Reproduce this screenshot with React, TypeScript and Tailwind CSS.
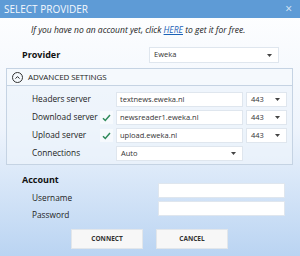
import { useState } from "react";

function Caret() {
  return (
    <svg width="5" height="3" viewBox="0 0 5 3" className="shrink-0">
      <path d="M0 0h5L2.5 3z" fill="#444" />
    </svg>
  );
}

function Check() {
  return (
    <svg width="9" height="8" viewBox="0 0 9 8">
      <path d="M1 4.2l2.3 2.3L8 1" fill="none" stroke="#2f8a5a" strokeWidth="1.5" />
    </svg>
  );
}

function Field({ value, className }: { value: string; className: string }) {
  return (
    <div className={"h-[15px] bg-white border border-[#dfe6ee] flex items-center px-[3px] text-[7.5px] text-[#333] " + className}>
      {value}
    </div>
  );
}

function Select({ value, className }: { value: string; className: string }) {
  return (
    <div className={"h-[15px] bg-white border border-[#dfe6ee] flex items-center justify-between pl-[4px] pr-[6px] text-[7.5px] text-[#333] " + className}>
      <span>{value}</span>
      <Caret />
    </div>
  );
}

interface RowProps {
  label: string;
  checked?: boolean;
  children: React.ReactNode;
}

function ServerRow({ label, checked, children }: RowProps) {
  return (
    <div className="flex items-center h-[15px]">
      <span className="w-[68px] pl-[25px] box-content text-[8.3px] text-[#222] whitespace-nowrap">{label}</span>
      <span className={checked ? "w-[13px] h-[13px] mr-[3px] flex items-center justify-center bg-white/50" : "w-[13px] h-[13px] mr-[3px]"}>
        {checked ? <Check /> : null}
      </span>
      {children}
    </div>
  );
}

export default function App() {
  const [open] = useState(true);

  return (
    <div className="w-[300px] h-[256px] overflow-hidden flex flex-col bg-gradient-to-b from-white via-[#eef4fc] to-[#bad4f2] font-['Open_Sans',sans-serif]">
      <div className="h-[18px] shrink-0 bg-[#5e9bd6] flex items-center justify-between pl-[4px] pr-[8px] text-[#f4f8fd] text-[10px]">
        <span>SELECT PROVIDER</span>
        <span className="text-[12px] text-[#dbe8f6]">×</span>
      </div>

      <p className="mt-[6px] pl-[31px] leading-[12px] italic text-[8.5px] text-[#222] whitespace-nowrap">
        If you have no an account yet, click <span className="underline text-[#1c63b7]">HERE</span> to get it for free.
      </p>

      <div className="mt-[11px] flex items-center pl-[22px] pr-[21px] h-[16px]">
        <span className="font-bold text-[9px] text-[#111]">Provider</span>
        <Select value="Eweka" className="ml-auto w-[130px] h-[16px]" />
      </div>

      <div className="mt-[5px] mx-[6px] mr-[7px] border border-[#c5d3e3] bg-[#edf3fb]/70">
        <div className="h-[17px] flex items-center pl-[5px] gap-[5px] border-b border-[#c5d3e3] bg-white/40">
          <span className="w-[11px] h-[11px] rounded-full border border-[#333] flex items-center justify-center">
            <svg width="5" height="3" viewBox="0 0 5 3">
              <path d="M0.5 2.6L2.5 0.6L4.5 2.6" fill="none" stroke="#222" strokeWidth="1" />
            </svg>
          </span>
          <span className="text-[8px] text-[#222] tracking-[-0.1px]">ADVANCED SETTINGS</span>
        </div>
        {open && (
          <div className="pt-[6px] pb-[3px] flex flex-col gap-[3px]">
            <ServerRow label="Headers server">
              <Field value="textnews.eweka.nl" className="w-[127px]" />
              <Select value="443" className="ml-[3px] w-[41px]" />
            </ServerRow>
            <ServerRow label="Download server" checked>
              <Field value="newsreader1.eweka.nl" className="w-[127px]" />
              <Select value="443" className="ml-[3px] w-[41px]" />
            </ServerRow>
            <ServerRow label="Upload server" checked>
              <Field value="upload.eweka.nl" className="w-[127px]" />
              <Select value="443" className="ml-[3px] w-[41px]" />
            </ServerRow>
            <ServerRow label="Connections">
              <Select value="Auto" className="w-[127px]" />
            </ServerRow>
          </div>
        )}
      </div>

      <div className="mt-[9px] flex">
        <div className="w-[158px] pl-[22px] flex flex-col">
          <span className="font-bold text-[9px] text-[#111] leading-[12px]">Account</span>
          <span className="mt-[6px] pl-[10px] text-[8.3px] text-[#222] leading-[12px]">Username</span>
          <span className="mt-[5px] pl-[10px] text-[8.3px] text-[#222] leading-[12px]">Password</span>
        </div>
        <div className="pt-[9px] flex flex-col gap-[3px]">
          <div className="w-[127px] h-[15px] bg-white border border-[#dfe6ee]" />
          <div className="w-[127px] h-[15px] bg-white border border-[#dfe6ee]" />
        </div>
      </div>

      <div className="mt-[8px] flex justify-center gap-[13px] pr-[1px]">
        <button className="w-[72px] h-[20px] bg-[#f7f7f7] border border-[#e2e6ea] text-[6.5px] font-bold text-[#333]">CONNECT</button>
        <button className="w-[72px] h-[20px] bg-[#f7f7f7] border border-[#e2e6ea] text-[6.5px] font-bold text-[#333]">CANCEL</button>
      </div>
    </div>
  );
}
